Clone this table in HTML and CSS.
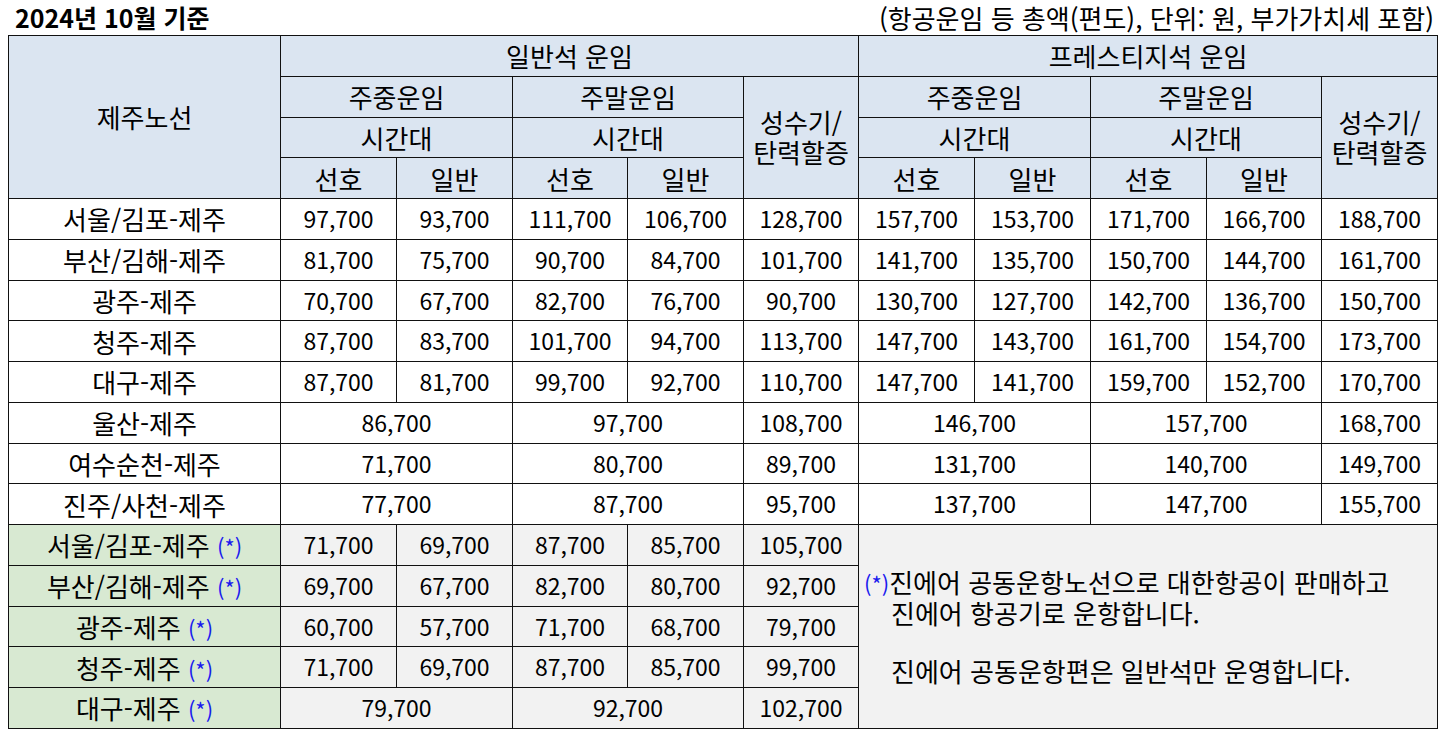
FILE: index.html
```html
<!DOCTYPE html>
<html lang="ko">
<head>
<meta charset="utf-8">
<title>제주노선 운임</title>
<link rel="stylesheet" href="styles.css">
</head>
<body>
<div class="page">
  <div class="topbar">
    <div class="title">2024년 10월 기준</div>
    <div class="unit">(항공운임 등 총액(편도), 단위: 원, 부가가치세 포함)</div>
  </div>
  <table class="fares">
    <colgroup>
      <col class="c-route">
      <col class="c-a"><col class="c-a"><col class="c-b"><col class="c-a"><col class="c-b">
      <col class="c-a"><col class="c-a"><col class="c-a"><col class="c-b"><col class="c-a">
    </colgroup>
    <thead>
      <tr>
        <th rowspan="4">제주노선</th>
        <th colspan="5">일반석 운임</th>
        <th colspan="5">프레스티지석 운임</th>
      </tr>
      <tr>
        <th colspan="2">주중운임</th>
        <th colspan="2">주말운임</th>
        <th rowspan="3" class="peak"><span class="ln">성수기/</span><span class="ln">탄력할증</span></th>
        <th colspan="2">주중운임</th>
        <th colspan="2">주말운임</th>
        <th rowspan="3" class="peak"><span class="ln">성수기/</span><span class="ln">탄력할증</span></th>
      </tr>
      <tr>
        <th colspan="2">시간대</th>
        <th colspan="2">시간대</th>
        <th colspan="2">시간대</th>
        <th colspan="2">시간대</th>
      </tr>
      <tr>
        <th>선호</th><th>일반</th><th>선호</th><th>일반</th>
        <th>선호</th><th>일반</th><th>선호</th><th>일반</th>
      </tr>
    </thead>
    <tbody>
      <tr><td class="route">서울/김포-제주</td><td>97,700</td><td>93,700</td><td>111,700</td><td>106,700</td><td>128,700</td><td>157,700</td><td>153,700</td><td>171,700</td><td>166,700</td><td>188,700</td></tr>
      <tr><td class="route">부산/김해-제주</td><td>81,700</td><td>75,700</td><td>90,700</td><td>84,700</td><td>101,700</td><td>141,700</td><td>135,700</td><td>150,700</td><td>144,700</td><td>161,700</td></tr>
      <tr><td class="route">광주-제주</td><td>70,700</td><td>67,700</td><td>82,700</td><td>76,700</td><td>90,700</td><td>130,700</td><td>127,700</td><td>142,700</td><td>136,700</td><td>150,700</td></tr>
      <tr><td class="route">청주-제주</td><td>87,700</td><td>83,700</td><td>101,700</td><td>94,700</td><td>113,700</td><td>147,700</td><td>143,700</td><td>161,700</td><td>154,700</td><td>173,700</td></tr>
      <tr><td class="route">대구-제주</td><td>87,700</td><td>81,700</td><td>99,700</td><td>92,700</td><td>110,700</td><td>147,700</td><td>141,700</td><td>159,700</td><td>152,700</td><td>170,700</td></tr>
      <tr><td class="route">울산-제주</td><td colspan="2">86,700</td><td colspan="2">97,700</td><td>108,700</td><td colspan="2">146,700</td><td colspan="2">157,700</td><td>168,700</td></tr>
      <tr><td class="route">여수순천-제주</td><td colspan="2">71,700</td><td colspan="2">80,700</td><td>89,700</td><td colspan="2">131,700</td><td colspan="2">140,700</td><td>149,700</td></tr>
      <tr><td class="route">진주/사천-제주</td><td colspan="2">77,700</td><td colspan="2">87,700</td><td>95,700</td><td colspan="2">137,700</td><td colspan="2">147,700</td><td>155,700</td></tr>
      <tr class="codeshare">
        <td class="route">서울/김포-제주 <span class="star">(*)</span></td><td>71,700</td><td>69,700</td><td>87,700</td><td>85,700</td><td>105,700</td>
        <td rowspan="5" colspan="5" class="note">
          <p><span class="star">(*)</span>진에어 공동운항노선으로 대한항공이 판매하고</p>
          <p class="indent">진에어 항공기로 운항합니다.</p>
          <p class="indent blank">&nbsp;</p>
          <p class="indent">진에어 공동운항편은 일반석만 운영합니다.</p>
        </td>
      </tr>
      <tr class="codeshare"><td class="route">부산/김해-제주 <span class="star">(*)</span></td><td>69,700</td><td>67,700</td><td>82,700</td><td>80,700</td><td>92,700</td></tr>
      <tr class="codeshare"><td class="route">광주-제주 <span class="star">(*)</span></td><td>60,700</td><td>57,700</td><td>71,700</td><td>68,700</td><td>79,700</td></tr>
      <tr class="codeshare"><td class="route">청주-제주 <span class="star">(*)</span></td><td>71,700</td><td>69,700</td><td>87,700</td><td>85,700</td><td>99,700</td></tr>
      <tr class="codeshare"><td class="route">대구-제주 <span class="star">(*)</span></td><td colspan="2">79,700</td><td colspan="2">92,700</td><td>102,700</td></tr>
    </tbody>
  </table>
</div>
</body>
</html>
```

FILE: styles.css
```css
html, body {
  margin: 0;
  padding: 0;
  background: #ffffff;
}

body {
  font-family: "Noto Sans CJK KR", "Noto Sans", sans-serif;
  color: #000;
}

.page {
  padding-left: 8px;
  width: 1430px;
}

.topbar {
  height: 35px;
  display: flex;
  align-items: center;
  justify-content: space-between;
}

.title {
  font-weight: bold;
  font-size: 25px;
  padding-left: 7px;
  line-height: 1;
}

.unit {
  font-size: 26px;
  line-height: 1;
  padding-right: 4px;
  white-space: nowrap;
}

.fares {
  border-collapse: collapse;
  table-layout: fixed;
  width: 1430px;
  font-size: 23px;
}

.c-route { width: 272px; }
.c-a { width: 116px; }
.c-b { width: 115px; }

.fares tr {
  height: 40.76px;
}

.fares th,
.fares td {
  border: 1px solid #111;
  padding: 0;
  text-align: center;
  vertical-align: middle;
  font-weight: normal;
  line-height: 1.2;
  white-space: nowrap;
}

.fares th {
  background: #dbe5f1;
  font-size: 26px;
}

.fares td.route {
  font-size: 26px;
}

.fares th.peak .ln {
  display: block;
  line-height: 30px;
}

.codeshare td {
  background: #f2f2f2;
}

.codeshare td.route {
  background: #d8e9d2;
}

.star {
  color: #1a1aee;
  font-size: 22px;
}

.fares td.note {
  text-align: left;
  padding-left: 5px;
  background: #f2f2f2;
  font-size: 26px;
}

.note p {
  margin: 0;
  line-height: 29px;
}

.note p.indent {
  padding-left: 27px;
}
```
